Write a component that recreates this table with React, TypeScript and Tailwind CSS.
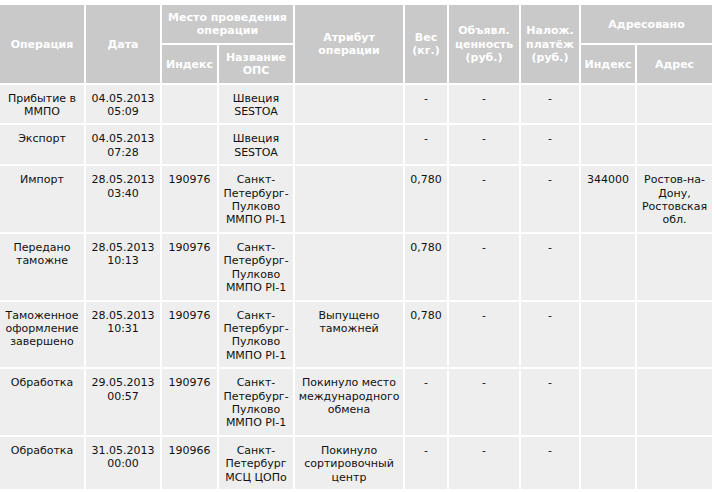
import React from "react";

type Row = {
    op: string;
    date: string;
    time: string;
    index: string;
    place: string;
    attr: string;
    weight: string;
    value: string;
    payment: string;
    toIndex: string;
    toAddress: string;
};

const rows: Row[] = [
    { op: "Прибытие в ММПО", date: "04.05.2013", time: "05:09", index: "", place: "Швеция SESTOA", attr: "", weight: "-", value: "-", payment: "-", toIndex: "", toAddress: "" },
    { op: "Экспорт", date: "04.05.2013", time: "07:28", index: "", place: "Швеция SESTOA", attr: "", weight: "-", value: "-", payment: "-", toIndex: "", toAddress: "" },
    { op: "Импорт", date: "28.05.2013", time: "03:40", index: "190976", place: "Санкт-Петербург-Пулково ММПО PI-1", attr: "", weight: "0,780", value: "-", payment: "-", toIndex: "344000", toAddress: "Ростов-на-Дону, Ростовская обл." },
    { op: "Передано таможне", date: "28.05.2013", time: "10:13", index: "190976", place: "Санкт-Петербург-Пулково ММПО PI-1", attr: "", weight: "0,780", value: "-", payment: "-", toIndex: "", toAddress: "" },
    { op: "Таможенное оформление завершено", date: "28.05.2013", time: "10:31", index: "190976", place: "Санкт-Петербург-Пулково ММПО PI-1", attr: "Выпущено таможней", weight: "0,780", value: "-", payment: "-", toIndex: "", toAddress: "" },
    { op: "Обработка", date: "29.05.2013", time: "00:57", index: "190976", place: "Санкт-Петербург-Пулково ММПО PI-1", attr: "Покинуло место международного обмена", weight: "-", value: "-", payment: "-", toIndex: "", toAddress: "" },
    { op: "Обработка", date: "31.05.2013", time: "00:00", index: "190966", place: "Санкт-Петербург МСЦ ЦОПо", attr: "Покинуло сортировочный центр", weight: "-", value: "-", payment: "-", toIndex: "", toAddress: "" },
];

const th = "bg-[#c9c9c9] text-white font-bold text-center align-middle px-[2px] pt-[6px] pb-[5px]";
const td = "bg-[#eeeeee] text-[#111] text-center align-top px-[2px] pt-[7px] pb-[5px]";

export default function App() {
    return (
        <div className="min-h-screen bg-white pt-[3px] font-['DejaVu_Sans','Verdana',sans-serif] text-[11px] leading-[13.4px]">
            <table className="-ml-[2px] w-[716px] table-fixed border-separate border-spacing-[2px]">
                <colgroup>
                    <col className="w-[84px]" />
                    <col className="w-[74px]" />
                    <col className="w-[55px]" />
                    <col className="w-[74px]" />
                    <col className="w-[108px]" />
                    <col className="w-[42px]" />
                    <col className="w-[70px]" />
                    <col className="w-[58px]" />
                    <col className="w-[54px]" />
                    <col className="w-[75px]" />
                </colgroup>
                <thead>
                    <tr>
                        <th rowSpan={2} className={th}>Операция</th>
                        <th rowSpan={2} className={th}>Дата</th>
                        <th colSpan={2} className={th}>Место проведения операции</th>
                        <th rowSpan={2} className={th}>Атрибут операции</th>
                        <th rowSpan={2} className={th}>Вес (кг.)</th>
                        <th rowSpan={2} className={th}>Объявл. ценность (руб.)</th>
                        <th rowSpan={2} className={th}>Налож. платёж (руб.)</th>
                        <th colSpan={2} className={th}>Адресовано</th>
                    </tr>
                    <tr>
                        <th className={th}>Индекс</th>
                        <th className={th}>Название ОПС</th>
                        <th className={th}>Индекс</th>
                        <th className={th}>Адрес</th>
                    </tr>
                </thead>
                <tbody>
                    {rows.map((r, i) => (
                        <tr key={i}>
                            <td className={td}>{r.op}</td>
                            <td className={td}>{r.date}<br />{r.time}</td>
                            <td className={td}>{r.index}</td>
                            <td className={td}>{r.place}</td>
                            <td className={td}>{r.attr}</td>
                            <td className={td}>{r.weight}</td>
                            <td className={td}>{r.value}</td>
                            <td className={td}>{r.payment}</td>
                            <td className={td}>{r.toIndex}</td>
                            <td className={td}>{r.toAddress}</td>
                        </tr>
                    ))}
                </tbody>
            </table>
        </div>
    );
}
